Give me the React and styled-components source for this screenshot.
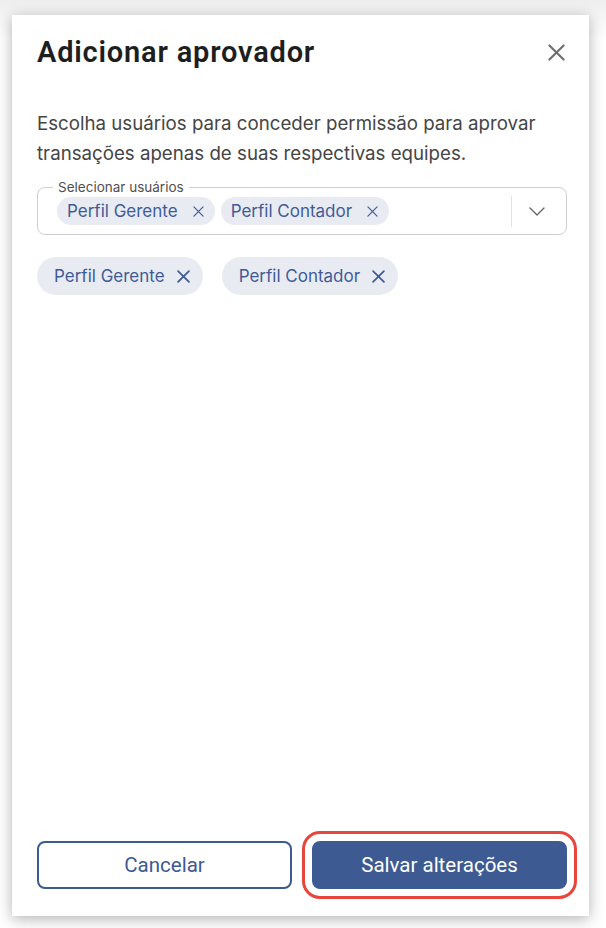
import React, { useState } from 'react'
import styled, { createGlobalStyle } from 'styled-components'

const GlobalStyle = createGlobalStyle`
  html, body {
    margin: 0;
    padding: 0;
    background: #ffffff;
  }
  * {
    box-sizing: border-box;
  }
`

const Page = styled.div`
  width: 606px;
  height: 928px;
  padding: 15px 17px 12px 12px;
  background: linear-gradient(#eeeeee, #ffffff 40px);
`

const Card = styled.div`
  height: 901px;
  background: #fff;
  box-shadow: 0 3px 14px rgba(0, 0, 0, 0.3);
  display: flex;
  flex-direction: column;
  padding: 22px 22px 27px 25px;
`

const Header = styled.div`
  display: flex;
  align-items: center;
  justify-content: space-between;
  height: 30px;
`

const Title = styled.h1`
  margin: 0;
  font-family: Roboto, 'Liberation Sans', sans-serif;
  font-size: 29px;
  font-weight: 600;
  letter-spacing: 0.8px;
  line-height: 30px;
  color: #1e1e1e;
`

const CloseButton = styled.button`
  width: 22px;
  height: 22px;
  padding: 0;
  border: none;
  background: none;
  display: flex;
  align-items: center;
  justify-content: center;
  color: #6e6e6e;
  cursor: pointer;
`

const Description = styled.p`
  margin: 42px 0 0;
  font-family: Inter, 'Noto Sans', sans-serif;
  font-size: 18.7px;
  line-height: 30px;
  color: #454545;
`

const Field = styled.div`
  position: relative;
  margin-top: 18px;
  height: 48px;
  border: 1px solid #cfcfcf;
  border-radius: 8px;
  display: flex;
  align-items: center;
  padding: 0 0 0 19px;
`

const FieldLabel = styled.span`
  position: absolute;
  top: -9px;
  left: 15px;
  padding: 0 5px;
  background: #fff;
  font-family: Inter, 'Noto Sans', sans-serif;
  font-size: 13.5px;
  line-height: 16px;
  color: #505050;
`

const ChipList = styled.div`
  flex: 1;
  display: flex;
  align-items: center;
  gap: ${(p) => p.$gap}px;
  flex-wrap: wrap;
`

const Chip = styled.span`
  display: inline-flex;
  align-items: center;
  height: ${(p) => (p.$large ? 38 : 28)}px;
  padding: 0 ${(p) => (p.$large ? 13 : 11)}px 0 ${(p) => (p.$large ? 17 : 10)}px;
  border-radius: 19px;
  background: #e9ebf3;
  color: #3f5b97;
  font-family: Inter, 'Noto Sans', sans-serif;
  font-size: 17px;
  gap: ${(p) => (p.$large ? 12 : 15)}px;
  white-space: nowrap;
`

const ChipRemove = styled.button`
  border: none;
  background: none;
  padding: 0;
  display: flex;
  color: inherit;
  cursor: pointer;
`

const Divider = styled.span`
  width: 1px;
  height: 31px;
  background: #e2e2e2;
`

const Toggle = styled.button`
  width: 54px;
  height: 100%;
  border: none;
  background: none;
  display: flex;
  align-items: center;
  justify-content: center;
  color: #666;
  padding: 0 4px 0 0;
`

const SelectedRow = styled.div`
  margin-top: 22px;
`

const Footer = styled.div`
  margin-top: auto;
  display: flex;
  gap: 20px;
`

const Button = styled.button`
  flex: 1;
  height: 48px;
  border-radius: 8px;
  font-family: Roboto, 'Liberation Sans', sans-serif;
  font-size: 20.5px;
  cursor: pointer;
  border: 2px solid #3d5a93;
  background: ${(p) => (p.$primary ? '#3d5a93' : '#fff')};
  color: ${(p) => (p.$primary ? '#fff' : '#3d5a93')};
  outline: ${(p) => (p.$highlight ? '3px solid #e8453c' : 'none')};
  outline-offset: 7px;
`

const XIcon = ({ size = 12, stroke = 1.4 }) => (
  <svg width={size} height={size} viewBox="0 0 12 12" fill="none">
    <path d="M1 1L11 11M11 1L1 11" stroke="currentColor" strokeWidth={stroke} strokeLinecap="round" />
  </svg>
)

const Chevron = () => (
  <svg width="16" height="9" viewBox="0 0 16 9" fill="none">
    <path d="M1 1L8 8L15 1" stroke="currentColor" strokeWidth="1.4" strokeLinecap="round" strokeLinejoin="round" />
  </svg>
)

const App = () => {
  const [users] = useState(['Perfil Gerente', 'Perfil Contador'])

  return (
    <>
      <GlobalStyle />
      <Page>
        <Card>
          <Header>
            <Title>Adicionar aprovador</Title>
            <CloseButton aria-label="Fechar">
              <XIcon size={17} stroke={1.5} />
            </CloseButton>
          </Header>
          <Description>
            Escolha usuários para conceder permissão para aprovar transações apenas de suas respectivas equipes.
          </Description>
          <Field>
            <FieldLabel>Selecionar usuários</FieldLabel>
            <ChipList $gap={6}>
              {users.map((u) => (
                <Chip key={u}>
                  {u}
                  <ChipRemove>
                    <XIcon size={11} stroke={1.3} />
                  </ChipRemove>
                </Chip>
              ))}
            </ChipList>
            <Divider />
            <Toggle>
              <Chevron />
            </Toggle>
          </Field>
          <SelectedRow>
            <ChipList $gap={19}>
              {users.map((u) => (
                <Chip key={u} $large>
                  {u}
                  <ChipRemove>
                    <XIcon size={13} stroke={1.6} />
                  </ChipRemove>
                </Chip>
              ))}
            </ChipList>
          </SelectedRow>
          <Footer>
            <Button>Cancelar</Button>
            <Button $primary $highlight>
              Salvar alterações
            </Button>
          </Footer>
        </Card>
      </Page>
    </>
  )
}

export default App
